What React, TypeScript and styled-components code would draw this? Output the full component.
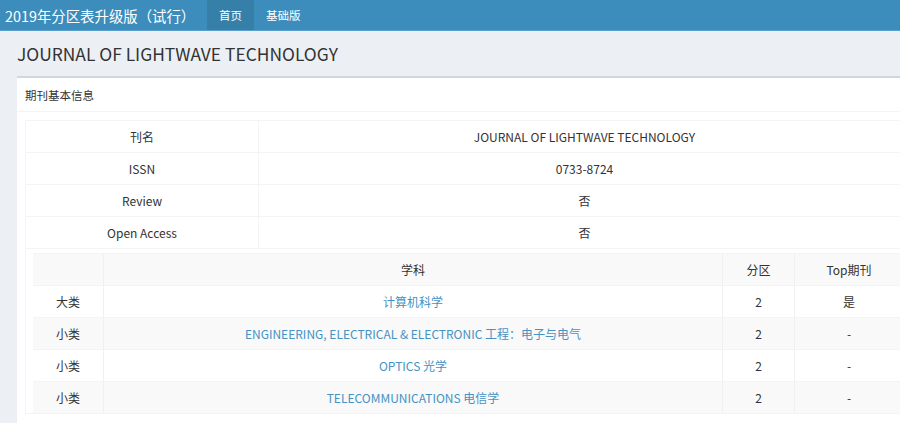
import React from "react";
import styled, { createGlobalStyle } from "styled-components";

const GlobalStyle = createGlobalStyle`
    html, body {
        margin: 0;
        padding: 0;
        overflow: hidden;
        background: #ecf0f5;
    }
    body {
        font-family: "Noto Sans CJK SC", "Noto Sans", sans-serif;
        color: #333;
    }
`

const Page = styled.div`
    width: 940px;
    min-height: 423px;
`

const TopBar = styled.header`
    display: flex;
    align-items: stretch;
    height: 30px;
    background: #3c8dbc;
    border-bottom: 1px solid #5ba0cc;
`

const Brand = styled.div`
    width: 202px;
    padding-left: 5px;
    display: flex;
    align-items: center;
    color: #fff;
    font-size: 14.4px;
    white-space: nowrap;
`

const NavItem = styled.a<{ active?: boolean }>`
    display: flex;
    align-items: center;
    padding: 0 12px;
    color: #fff;
    font-size: 11.5px;
    text-decoration: none;
    background: ${props => (props.active ? "#367fa9" : "transparent")};
`

const Content = styled.section`
    padding: 0 17px;
`

const PageTitle = styled.h1`
    margin: 0;
    height: 45px;
    display: flex;
    align-items: center;
    font-size: 17.4px;
    font-weight: 400;
    color: #333;
`

const Box = styled.div`
    width: 900px;
    background: #fff;
    border-top: 2px solid #d2d6de;
    padding-bottom: 10px;
`

const BoxHeader = styled.div`
    height: 33px;
    display: flex;
    align-items: center;
    padding: 0 8px;
    font-size: 11.5px;
    border-bottom: 1px solid #f4f4f4;
`

const BoxBody = styled.div`
    padding: 8px 8px 0;
`

const InfoTable = styled.table`
    width: 884px;
    border-collapse: collapse;
    border: 1px solid #f4f4f4;
    font-size: 12px;
    text-align: center;
`

const Cell = styled.td<{ w?: number }>`
    height: 31px;
    padding: 0;
    border: 1px solid #f4f4f4;
    width: ${props => (props.w ? `${props.w}px` : "auto")};
`

const Wrap = styled.td`
    padding: 4px 7px 0;
    border: none;
`

const SubjectTable = styled.table`
    width: 870px;
    border-collapse: collapse;
    font-size: 12px;
    text-align: center;

    tr:nth-of-type(odd) {
        background: #f9f9f9;
    }
`

const SubCell = styled.td<{ w?: number }>`
    height: 31px;
    padding: 0;
    border-left: 1px solid #f0f0f0;
    border-top: 1px solid #f4f4f4;
    width: ${props => (props.w ? `${props.w}px` : "auto")};

    &:first-child {
        border-left: none;
    }
`

const SubjectLink = styled.a`
    color: #4593c3;
    text-decoration: none;
`

const info = [
    ["刊名", "JOURNAL OF LIGHTWAVE TECHNOLOGY"],
    ["ISSN", "0733-8724"],
    ["Review", "否"],
    ["Open Access", "否"],
]

const subjects = [
    ["大类", "计算机科学", "2", "是"],
    ["小类", "ENGINEERING, ELECTRICAL & ELECTRONIC 工程：电子与电气", "2", "-"],
    ["小类", "OPTICS 光学", "2", "-"],
    ["小类", "TELECOMMUNICATIONS 电信学", "2", "-"],
]

export default function App() {
    return (
        <Page>
            <GlobalStyle />
            <TopBar>
                <Brand>2019年分区表升级版（试行）</Brand>
                <NavItem active href="#">首页</NavItem>
                <NavItem href="#">基础版</NavItem>
            </TopBar>
            <Content>
                <PageTitle>JOURNAL OF LIGHTWAVE TECHNOLOGY</PageTitle>
                <Box>
                    <BoxHeader>期刊基本信息</BoxHeader>
                    <BoxBody>
                        <InfoTable>
                            <tbody>
                                {info.map(([label, value]) => (
                                    <tr key={label}>
                                        <Cell w={232}>{label}</Cell>
                                        <Cell>{value}</Cell>
                                    </tr>
                                ))}
                                <tr>
                                    <Wrap colSpan={2}>
                                        <SubjectTable>
                                            <tbody>
                                                <tr>
                                                    <SubCell w={70}></SubCell>
                                                    <SubCell>学科</SubCell>
                                                    <SubCell w={71}>分区</SubCell>
                                                    <SubCell w={108}>Top期刊</SubCell>
                                                </tr>
                                                {subjects.map(([kind, name, zone, top]) => (
                                                    <tr key={name}>
                                                        <SubCell>{kind}</SubCell>
                                                        <SubCell>
                                                            <SubjectLink href="#">{name}</SubjectLink>
                                                        </SubCell>
                                                        <SubCell>{zone}</SubCell>
                                                        <SubCell>{top}</SubCell>
                                                    </tr>
                                                ))}
                                            </tbody>
                                        </SubjectTable>
                                    </Wrap>
                                </tr>
                            </tbody>
                        </InfoTable>
                    </BoxBody>
                </Box>
            </Content>
        </Page>
    );
}
